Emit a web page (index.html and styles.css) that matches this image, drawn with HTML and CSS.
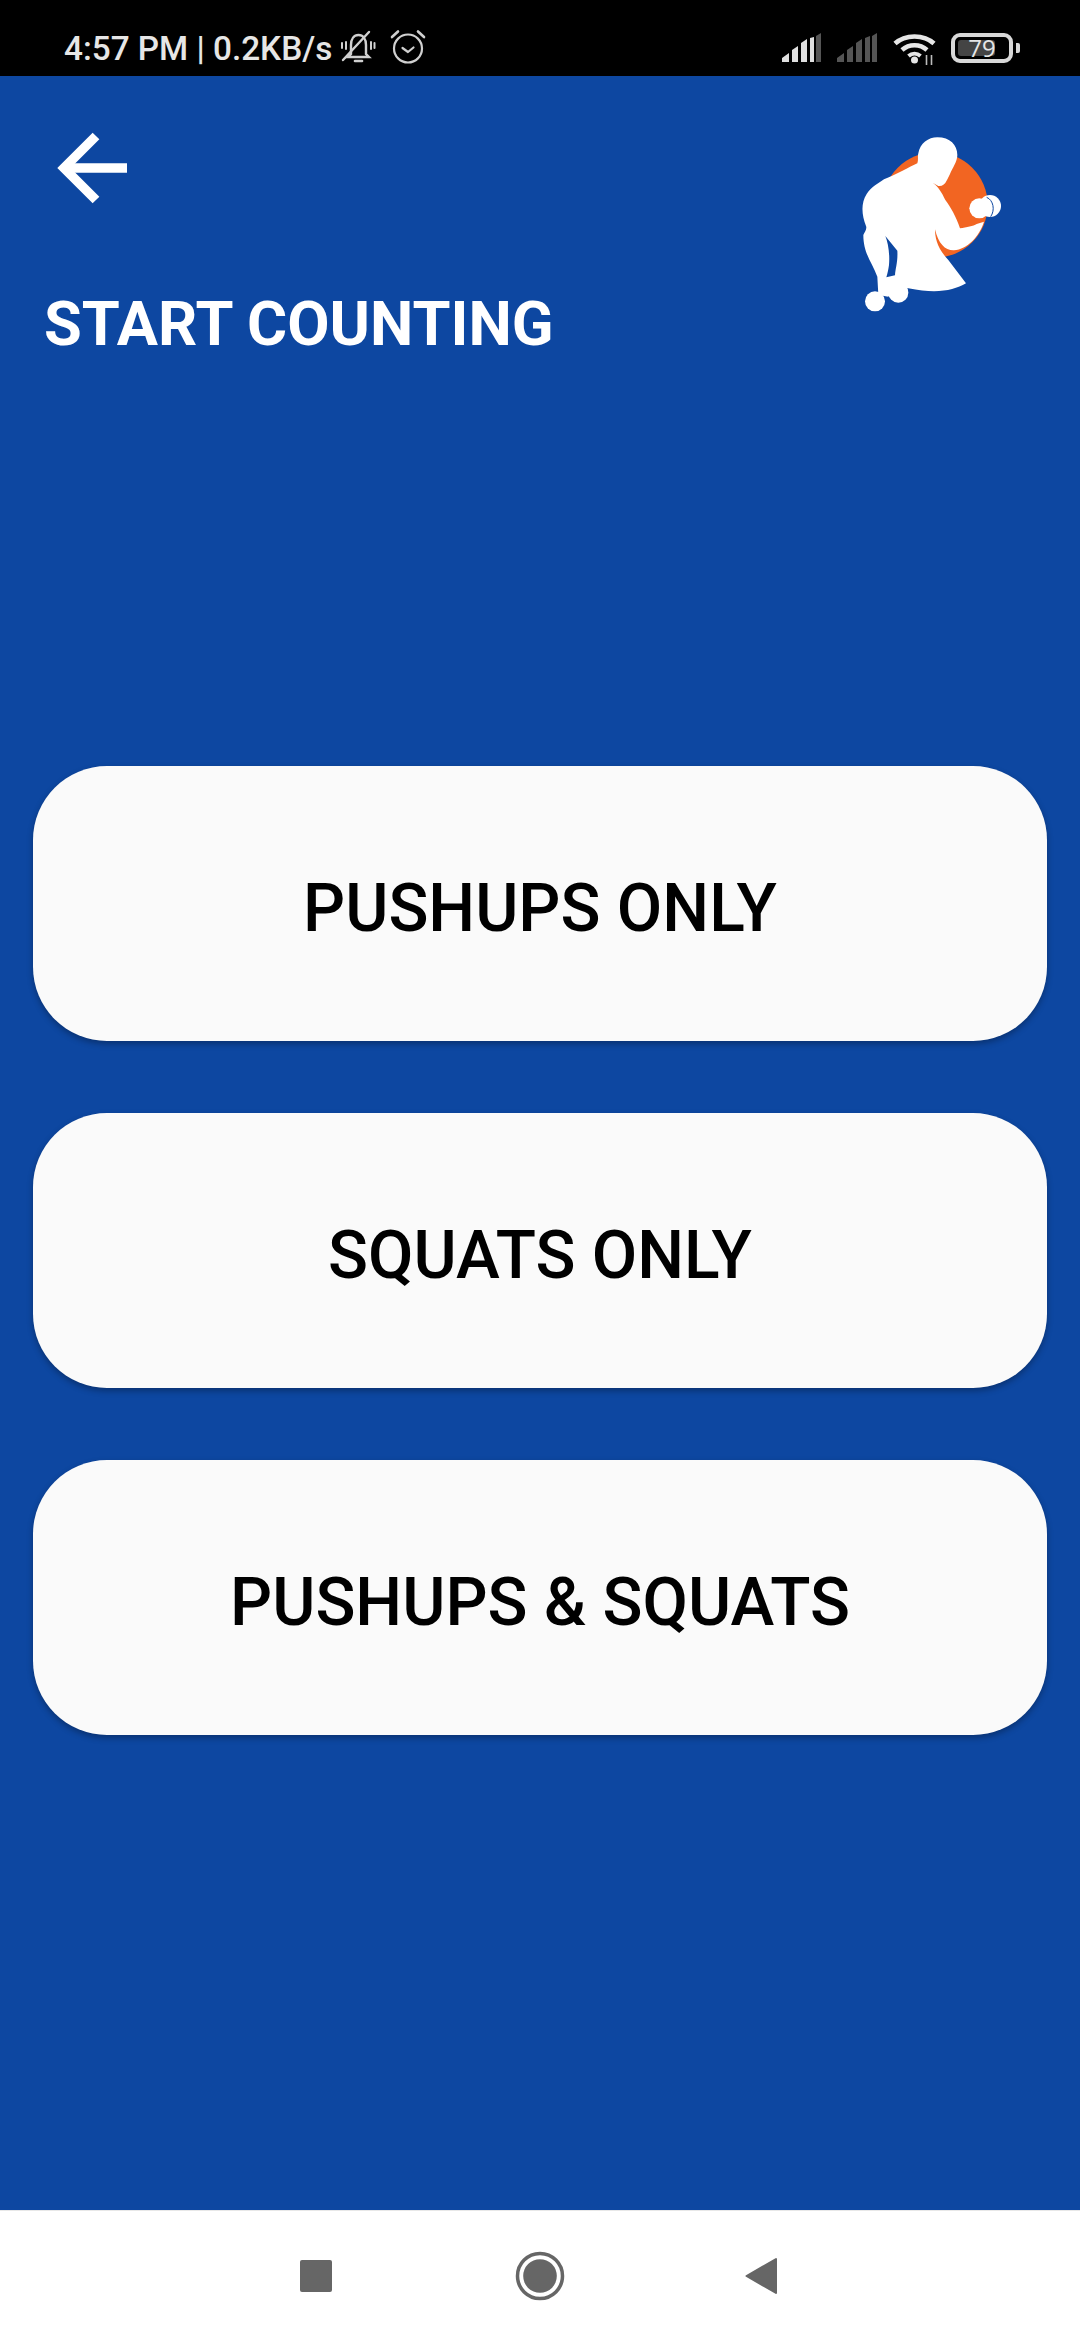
FILE: index.html
```html
<!DOCTYPE html>
<html lang="en">
<head>
<meta charset="utf-8">
<title>Start Counting</title>
<link rel="stylesheet" href="styles.css">
</head>
<body>
<div class="screen">
  <header class="status">
    <div class="status-left">
      <span class="status-text">4:57 PM | 0.2KB/s</span>
      <svg class="ic-bell" width="36" height="34" viewBox="0 0 36 34" fill="none" stroke="#d0d0d0" stroke-width="2.4" stroke-linecap="round">
        <path d="M11 24V15C11 9 14 5 18.500 5C23 5 26 9 26 15V24L29 27H8L11 24Z"/>
        <path d="M15 31H22" stroke-width="2.600"/>
        <path d="M29 2L3 30" stroke-width="2.400"/>
        <path d="M6 12V19M2 13V18M31 12V19M34.500 13V18" stroke-width="2"/>
      </svg>
      <svg class="ic-alarm" width="36" height="36" viewBox="0 0 36 36" fill="none" stroke="#d0d0d0" stroke-width="2.200" stroke-linecap="round" stroke-linejoin="round">
        <circle cx="18" cy="19.500" r="14"/>
        <path d="M12.500 19L18 23L23.500 18.500"/>
        <path d="M2 8L8 2.500M34 8L28 2.500" stroke-width="2.600"/>
      </svg>
    </div>
    <div class="status-right">
      <svg class="ic-sig" width="42" height="30" viewBox="0 0 42 30">
        <path fill="#e0e0e0" d="M1 25L8 20V29H1ZM11 17L17 13V29H11ZM20 10L26 6V29H20Z"/>
        <path fill="#e0e0e0" d="M29 5L29 29H33V4Z"/>
        <path fill="#555" d="M35 3L40 0V29H35Z"/>
      </svg>
      <svg class="ic-sig2" width="42" height="30" viewBox="0 0 42 30">
        <path fill="#555" d="M1 25L8 20V29H1ZM11 17L17 13V29H11ZM20 10L26 6V29H20ZM29 5L34 3V29H29ZM36 3L41 0V29H36Z"/>
      </svg>
      <svg class="ic-wifi" width="44" height="32" viewBox="0 0 44 32" fill="none" stroke="#e6e6e6" stroke-width="4.500">
        <path d="M2 10.500C12 1 31 1 41 10.500"/>
        <path d="M9 17C16 10.500 27 10.500 34 17"/>
        <path d="M15.500 23C19 20 24 20 27.500 23" stroke-width="4"/>
        <circle cx="21.500" cy="27" r="3.500" fill="#e6e6e6" stroke="none"/>
        <path d="M33.500 32V22M38.500 32V22" stroke-width="1.600" stroke="#bbb"/>
      </svg>
      <div class="battery">
        <div class="battery-box"><span class="battery-fill"></span><span class="battery-num">79</span></div>
        <span class="battery-nub"></span>
      </div>
    </div>
  </header>

  <main class="main">
    <section class="top">
      <div class="top-left">
        <svg class="back" width="72" height="72" viewBox="0 0 72 72" fill="none" stroke="#fff" stroke-width="9.500">
          <path d="M71 36H8"/>
          <path d="M40 4L8 36L40 68" stroke-linejoin="miter"/>
        </svg>
        <h1 class="title">START COUNTING</h1>
      </div>
      <svg class="logo" width="200" height="200" viewBox="0 0 600 600">
        <circle cx="345" cy="255" r="158" fill="#f26522"/>
        <path fill="#fff" fill-rule="evenodd" d="M295 100C300 70 325 52 352 52C390 52 412 75 412 105C412 125 397 145 390 162L381 180Q372 200 355 198L338 188C355 200 366 218 376 240C392 262 408 288 420 325C440 322 460 318 470 312L492 305C478 350 442 387 402 391C376 392 355 372 345 328C345 355 352 385 385 420L438 490C400 512 350 522 265 505L225 505L205 530L175 525L172 470C155 425 130 400 130 345C132 338 142 328 138 318C125 285 122 250 140 222C155 200 175 190 192 178C225 165 270 140 292 130C296 118 292 110 295 100ZM196 348C204 368 210 400 207 435C205 450 202 462 199 472L225 466C226 445 234 425 232 392Z"/>
        <circle cx="165" cy="544" r="30" fill="#fff"/>
        <circle cx="235" cy="518" r="30" fill="#fff"/>
        <circle cx="478" cy="265" r="30" fill="#fff"/>
        <circle cx="510" cy="258" r="33" fill="#fff"/>
        <path d="M500 232C520 240 526 270 512 290" fill="none" stroke="#0d47a1" stroke-width="3"/>
      </svg>
    </section>
    <section class="actions">
      <button class="action" type="button">PUSHUPS ONLY</button>
      <button class="action" type="button">SQUATS ONLY</button>
      <button class="action" type="button">PUSHUPS &amp; SQUATS</button>
    </section>
  </main>

  <nav class="nav">
    <span class="nav-square"></span>
    <svg class="nav-home" width="50" height="50" viewBox="0 0 50 50">
      <circle cx="25" cy="25" r="22.500" fill="none" stroke="#666" stroke-width="3.500"/>
      <circle cx="25" cy="25" r="16.800" fill="#666"/>
    </svg>
    <svg class="nav-back" width="32" height="38" viewBox="0 0 32 38">
      <path d="M31 2V36L1.500 19Z" fill="#666" stroke="#666" stroke-width="2" stroke-linejoin="round"/>
    </svg>
  </nav>
</div>
</body>
</html>
```
FILE: styles.css
```css
* { box-sizing: border-box; }
html, body { margin: 0; padding: 0; }
body { font-family: Roboto, "Liberation Sans", sans-serif; background: #fff; }
.screen { width: 1080px; height: 2340px; display: flex; flex-direction: column; overflow: hidden; }

.status { height: 76px; flex: none; background: #000; display: flex; justify-content: space-between; align-items: flex-start; padding: 31px 60px 0 64px; }
.status-left { display: flex; align-items: flex-start; }
.status-text { font-size: 33.300px; line-height: 36px; font-weight: 500; color: #e6e6e6; white-space: nowrap; }
.ic-bell { margin: -1px 0 0 8px; }
.ic-alarm { margin: -2px 0 0 14px; }
.status-right { display: flex; align-items: flex-start; margin-top: 2px; }
.ic-sig2 { margin-left: 13px; }
.ic-wifi { margin-left: 15px; }
.battery { display: flex; align-items: center; margin-left: 14px; }
.battery-box { position: relative; width: 62px; height: 30px; border: 4px solid #d8d8d8; border-radius: 9px; display: flex; align-items: center; justify-content: center; }
.battery-fill { position: absolute; left: 3px; top: 3px; bottom: 3px; width: 37px; background: #444; border-radius: 3px; }
.battery-num { position: relative; font-size: 24px; line-height: 22px; color: #e6e6e6; font-family: "Open Sans", Roboto, sans-serif; }
.battery-nub { width: 4px; height: 10px; margin-left: 3px; background: #d8d8d8; border-radius: 0 2px 2px 0; }

.main { flex: 1; background: #0d47a1; display: flex; flex-direction: column; padding: 0 33px; }
.top { height: 690px; flex: none; display: flex; justify-content: space-between; align-items: flex-start; }
.top-left { display: flex; flex-direction: column; align-items: flex-start; padding: 56px 0 0 11px; }
.back { display: block; margin-left: 12px; }
.title { margin: 85px 0 0; font-size: 61.400px; line-height: 70px; font-weight: 700; color: #fff; white-space: nowrap; }
.logo { display: block; margin: 44px 27px 0 0; }

.actions { display: flex; flex-direction: column; gap: 72px; }
.action { height: 275px; border: 0; padding: 9px 0 0; border-radius: 74px; background: #fafafa; color: #000; font-family: Roboto, "Liberation Sans", sans-serif; font-size: 66px; font-weight: 500; box-shadow: 0 3px 6px rgba(0, 0, 0, .3); }

.nav { height: 130px; flex: none; background: #fff; border-top: 1px solid #e8e8e8; display: flex; align-items: center; padding: 0 0 0 300px; }
.nav-square { display: block; width: 32px; height: 32px; background: #666; border-radius: 2px; }
.nav-home { display: block; margin-left: 183px; }
.nav-back { display: block; margin-left: 180px; }
```
